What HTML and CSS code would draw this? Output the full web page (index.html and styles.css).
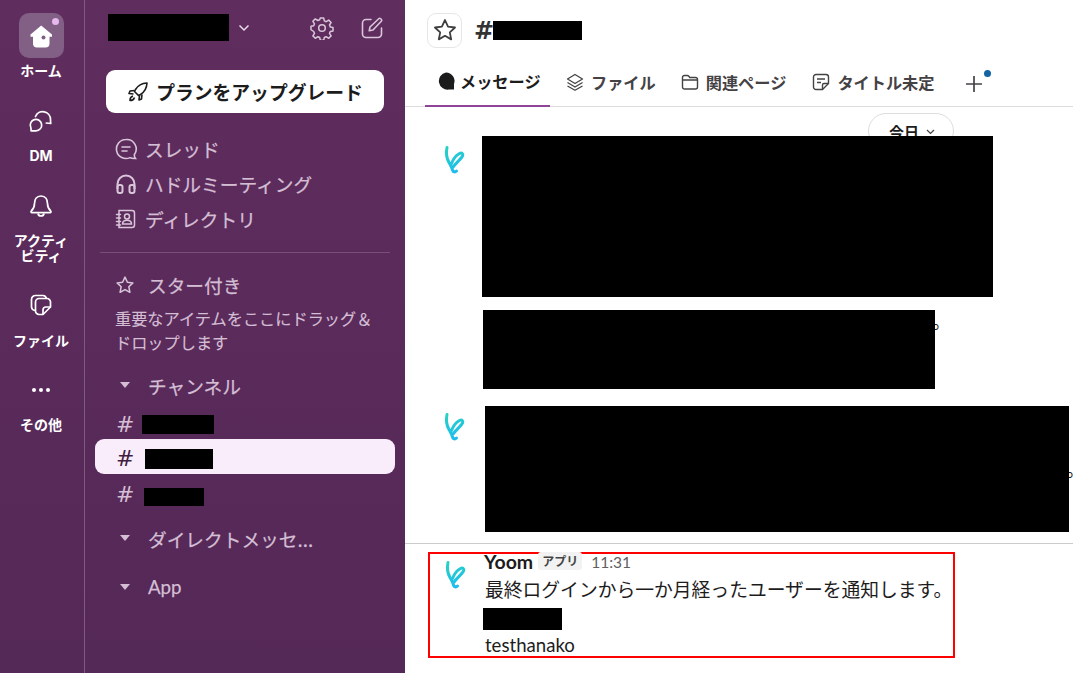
FILE: index.html
```html
<!DOCTYPE html>
<html lang="ja">
<head>
<meta charset="utf-8">
<title>Slack</title>
<link rel="stylesheet" href="styles.css">
</head>
<body>
<div class="app">
  <nav class="rail">
    <div class="rail-item home">
      <div class="home-box">
        <svg width="26" height="26" viewBox="0 0 26 26"><path d="M13.200 2.500 2.500 11.500v2.200h2.500v6.800a4 4 0 0 0 4 4h8.500a4 4 0 0 0 4-4v-6.800h2.500v-2.200z" fill="#fff"/><circle cx="15.500" cy="14.500" r="2" fill="#80607f"/></svg>
        <span class="home-dot"></span>
      </div>
      <span class="rail-label">ホーム</span>
    </div>
    <div class="rail-item dm">
      <svg width="26" height="26" viewBox="0 0 26 26" fill="none" stroke="#fff" stroke-width="1.700" stroke-linecap="round" stroke-linejoin="round"><path d="M7.500 8.500A7.800 7.800 0 0 1 22.500 11.500c0 1.400 0 2.700.3 4l-4.500-.5"/><path d="M3 22.800h5a5.700 5.700 0 1 0-5.200-3.300c.3 1 .5 2.200.2 3.300z"/></svg>
      <span class="rail-label lbl-dm">DM</span>
    </div>
    <div class="rail-item bell">
      <svg width="24" height="26" viewBox="0 0 24 26" fill="none" stroke="#fff" stroke-width="1.700" stroke-linejoin="round"><path d="M12 3c-4.500 0-6.500 3.500-6.500 7.500 0 3.500-1 5.500-3.200 7.500-.7.800-.2 1.700.7 1.700h18c.9 0 1.400-.9.700-1.700-2.200-2-3.200-4-3.200-7.500C18.500 6.500 16.500 3 12 3z"/><path d="M9 20.500c.3 1.700 1.500 2.500 3 2.500s2.700-.8 3-2.500"/></svg>
      <span class="rail-label lbl-act">アクティ<br>ビティ</span>
    </div>
    <div class="rail-item files">
      <svg width="24" height="24" viewBox="0 0 24 24" fill="none" stroke="#fff" stroke-width="1.700" stroke-linejoin="round"><path d="M6 17.500A4 4 0 0 1 2.500 14V6.500a4 4 0 0 1 4-4H14a4 4 0 0 1 3.500 3"/><path d="M10 5.500h8a3.500 3.500 0 0 1 3.500 3.500v5l-7.500 7.500H10A3.500 3.500 0 0 1 6.500 18V9A3.500 3.500 0 0 1 10 5.500z"/><path d="M21.500 14h-4.500a3 3 0 0 0-3 3v4.500"/></svg>
      <span class="rail-label lbl-file">ファイル</span>
    </div>
    <div class="rail-item more">
      <div class="dots"><i></i><i></i><i></i></div>
      <span class="rail-label lbl-more">その他</span>
    </div>
  </nav>

  <aside class="side">
    <header class="ws">
      <div class="redact ws-name"></div>
      <svg class="ws-chev" width="12" height="8" viewBox="0 0 12 8" fill="none" stroke="#e8dde8" stroke-width="1.500"><path d="m1.500 1.500 4.500 4.500 4.500-4.500"/></svg>
      <svg class="ws-gear" width="24" height="24" viewBox="0 0 24 24" fill="none" stroke="#d9c6d9" stroke-width="1.500" stroke-linejoin="round"><circle cx="12" cy="12" r="3.300"/><path d="M10.300 2h3.400l.6 2.900 1.900.8 2.500-1.600 2.400 2.400-1.600 2.500.8 1.900 2.700.6v3.400l-2.700.6-.8 1.900 1.600 2.500-2.400 2.400-2.500-1.600-1.900.8-.6 2.700h-3.400l-.6-2.700-1.900-.8-2.500 1.600-2.400-2.400 1.600-2.500-.8-1.900L1 13.700v-3.400l2.700-.6.800-1.900-1.600-2.500 2.400-2.400 2.500 1.600 1.900-.8z"/></svg>
      <svg class="ws-edit" width="24" height="24" viewBox="0 0 24 24" fill="none" stroke="#d9c6d9" stroke-width="1.600" stroke-linecap="round" stroke-linejoin="round"><path d="M11 3.500H6A3.500 3.500 0 0 0 2.500 7v11A3.500 3.500 0 0 0 6 21.500h12a3.500 3.500 0 0 0 3.500-3.500v-6"/><path d="m10 11 9-8.500c1-.9 3.500 1.500 2.500 2.500L13 14l-3.800.8z"/></svg>
    </header>
    <button class="upgrade">
      <svg width="22" height="22" viewBox="0 0 22 22" fill="none" stroke="#1d1c1d" stroke-width="1.600" stroke-linejoin="round"><path d="M20 2c-5 .3-9 2.300-11.500 6.500l-1 2 4 4 2-1C17.700 11 19.700 7 20 2z"/><path d="M7.500 9.500 3 10l-1 2.500 4.500.5M12.500 14.500 12 19l2.500-1 .5-4.500M6 15c-2 .5-3 2.500-3 4.500 2 0 4-1 4.500-3"/></svg>
      <span>プランをアップグレード</span>
    </button>
    <div class="nav-row">
      <svg width="24" height="24" viewBox="0 0 24 24" fill="none" stroke="#d9c6d9" stroke-width="1.600" stroke-linecap="round"><path d="M12 2.500a9.500 9.500 0 1 0 4 18.100c1.500.9 3.500 1 5.500.9-1-1.300-1.300-2.700-1.100-4A9.500 9.500 0 0 0 12 2.500z"/><path d="M8 10h8M8 14h5"/></svg>
      <span>スレッド</span>
    </div>
    <div class="nav-row">
      <svg width="24" height="24" viewBox="0 0 24 24" fill="none" stroke="#d9c6d9" stroke-width="2"><path d="M3.500 17v-5a8.500 8.500 0 0 1 17 0v5"/><rect x="3.500" y="13" width="5" height="8" rx="2"/><rect x="15.500" y="13" width="5" height="8" rx="2"/></svg>
      <span>ハドルミーティング</span>
    </div>
    <div class="nav-row">
      <svg width="24" height="24" viewBox="0 0 24 24" fill="none" stroke="#d9c6d9" stroke-width="1.500" stroke-linecap="round"><path d="M5 3.500h13a2.500 2.500 0 0 1 2.500 2.500v12a2.500 2.500 0 0 1-2.500 2.500H5z"/><path d="M2.500 7.500h4M2.500 11h4M2.500 14.500h4M2.500 18h4"/><circle cx="13" cy="9.500" r="2.500"/><path d="M8.500 17c0-5 9-5 9 0z"/></svg>
      <span>ディレクトリ</span>
    </div>
    <div class="divider"></div>
    <div class="sec-row star-row">
      <svg width="20" height="20" viewBox="0 0 24 24" fill="none" stroke="#d9c6d9" stroke-width="1.800" stroke-linejoin="round"><path d="m12 2.500 2.900 6.200 6.600.8-4.900 4.600 1.300 6.700-5.900-3.300-5.900 3.300 1.300-6.700-4.900-4.600 6.600-.8z"/></svg>
      <span class="star-text">スター付き</span>
    </div>
    <p class="hint">重要なアイテムをここにドラッグ＆<br>ドロップします</p>
    <div class="sec-row chan-head"><i class="tri"></i><span>チャンネル</span></div>
    <div class="chan c1"><span class="hash">#</span><div class="redact"></div></div>
    <div class="chan c2"><span class="hash">#</span><div class="redact"></div></div>
    <div class="chan c3"><span class="hash">#</span><div class="redact"></div></div>
    <div class="sec-row dm-head"><i class="tri"></i><span>ダイレクトメッセ...</span></div>
    <div class="sec-row app-head"><i class="tri"></i><span>App</span></div>
  </aside>

  <main class="main">
    <header class="title">
      <div class="star-btn"><svg width="24" height="24" viewBox="0 0 24 24" fill="none" stroke="#3f3f3f" stroke-width="1.800" stroke-linejoin="round"><path d="m12 2 3 6.600 7 .9-5.200 4.800 1.400 7.100-6.200-3.600-6.200 3.600 1.400-7.100L1.900 9.500l7-.9z"/></svg></div>
      <span class="title-hash">#</span>
      <div class="redact"></div>
    </header>
    <div class="tabs">
      <div class="tab active">
        <svg width="18" height="18" viewBox="0 0 18 18"><path d="M9 .5a8.500 8.500 0 0 1 8 11.500v5.500h-5A8.500 8.500 0 1 1 9 .5z" fill="#1d1c1d"/></svg>
        <span>メッセージ</span>
      </div>
      <div class="tab t-file">
        <svg width="18" height="18" viewBox="0 0 18 18" fill="none" stroke="#454245" stroke-width="1.300" stroke-linejoin="round"><path d="M9 1.500 1.500 6 9 10.500 16.500 6z"/><path d="m1.500 9.500 7.500 4.500 7.500-4.500M1.500 13 9 17.200l7.500-4.200"/></svg>
        <span>ファイル</span>
      </div>
      <div class="tab t-rel">
        <svg width="18" height="18" viewBox="0 0 18 18" fill="none" stroke="#454245" stroke-width="1.400" stroke-linejoin="round"><path d="M1.500 4.500a2 2 0 0 1 2-2h2.800a2 2 0 0 1 1.500.7l.9 1.300h5.800a2 2 0 0 1 2 2v7.500a2 2 0 0 1-2 2h-11a2 2 0 0 1-2-2zM1.500 7h15"/></svg>
        <span>関連ページ</span>
      </div>
      <div class="tab t-title">
        <svg width="18" height="18" viewBox="0 0 18 18" fill="none" stroke="#454245" stroke-width="1.400" stroke-linejoin="round"><path d="M4 1.500h10A2.500 2.500 0 0 1 16.500 4v6.500l-6 6H4A2.500 2.500 0 0 1 1.500 14V4A2.500 2.500 0 0 1 4 1.500z"/><path d="M5 6h8M5 9.500h4M16.500 10.500H12a1.500 1.500 0 0 0-1.500 1.500v4.500"/></svg>
        <span>タイトル未定</span>
      </div>
      <div class="tab-add">
        <svg width="16" height="16" viewBox="0 0 16 16" stroke="#454245" stroke-width="1.700"><path d="M8 0v16M0 8h16"/></svg>
        <i class="add-dot"></i>
      </div>
    </div>
    <div class="feed">
      <div class="date-row"><div class="date-pill"><span>今日</span><svg width="9" height="6" viewBox="0 0 9 6" fill="none" stroke="#454245" stroke-width="1.200"><path d="m1 1 3.500 3.500L8 1"/></svg></div></div>
      <section class="m1">
        <div class="avatar"><svg width="24" height="32" viewBox="0 0 24 32" fill="none"><use href="#yoom"/></svg></div>
        <div class="redact b1"></div>
      </section>
      <div class="m1b"><div class="redact b2"></div><span class="maru">。</span></div>
      <section class="m2">
        <div class="avatar"><svg width="24" height="32" viewBox="0 0 24 32" fill="none"><use href="#yoom"/></svg></div>
        <div class="redact b3"></div><span class="maru m2-maru">。</span>
      </section>
      <div class="rule"></div>
      <section class="boxed">
        <div class="avatar a3"><svg width="24" height="32" viewBox="0 0 24 32" fill="none"><use href="#yoom"/></svg></div>
        <div class="msg">
          <div class="meta"><b>Yoom</b><span class="tag">アプリ</span><time>11:31</time></div>
          <div class="line1">最終ログインから一か月経ったユーザーを通知します。</div>
          <div class="redact b4"></div>
          <div class="line2">testhanako</div>
        </div>
      </section>
    </div>
  </main>
</div>
<svg class="defs" width="0" height="0">
  <defs>
    <linearGradient id="yg" gradientUnits="userSpaceOnUse" x1="4" y1="3" x2="14" y2="29"><stop offset="0" stop-color="#28d2c0"/><stop offset="1" stop-color="#1cbcf0"/></linearGradient>
    <path id="yoom" d="M5 3.500C3.800 9 4.800 14.500 7 18.500c1.500 2.800 2.800 5 3.500 7.500.6 2 2.500 2.500 4 1M9.500 19.500C11 15.500 14.500 11 17.500 9.500c2.500-1.300 4 .5 3 2.500-1.500 3-6 6.500-9.500 11" stroke="url(#yg)" stroke-width="3" stroke-linecap="round"/>
  </defs>
</svg>
</body>
</html>
```
FILE: styles.css
```css
* { box-sizing: border-box; }
html, body { margin: 0; height: 100%; overflow: hidden; }
body { font-family: "Noto Sans CJK JP", "Noto Sans", sans-serif; background: #fff; color: #1d1c1d; }
.defs { position: absolute; }
.redact { background: #000; position: relative; z-index: 1; flex: none; }
.app { display: flex; height: 673px; width: 1073px; }

.rail { width: 85px; flex: none; background: linear-gradient(#5f2d5e, #542857); border-right: 1px solid #7f5a80; display: flex; flex-direction: column; align-items: flex-start; padding-top: 13px; }
.rail-item { display: flex; flex-direction: column; align-items: center; width: 82px; }
.rail-label { color: #fff; font-size: 14px; font-weight: 700; line-height: 15px; text-align: center; }
.home-box { position: relative; width: 45px; height: 45px; border-radius: 10px; background: #825f85; display: flex; align-items: center; justify-content: center; }
.home-dot { position: absolute; top: 5px; right: 5px; width: 7px; height: 7px; border-radius: 50%; background: #e6b8ee; }
.home .rail-label { margin-top: 5px; }
.dm { margin-top: 30px; }
.lbl-dm { margin-top: 14px; font-family: "Inter", sans-serif; font-size: 14px; }
.bell { margin-top: 30px; }
.lbl-act { margin-top: 14px; }
.files { margin-top: 30px; }
.lbl-file { margin-top: 16px; }
.more { margin-top: 40px; }
.dots { display: flex; gap: 3px; height: 4px; margin-bottom: 25px; }
.dots i { width: 4px; height: 4px; border-radius: 50%; background: #fff; }

.side { width: 320px; flex: none; background: linear-gradient(#5f2d5e, #542857); color: #d4bed4; padding: 14px 10px 0; display: flex; flex-direction: column; }
.ws { display: flex; align-items: center; height: 27px; padding-left: 13px; }
.ws-name { width: 121px; height: 27px; }
.ws-chev { margin-left: 9px; }
.ws-gear { margin-left: 60px; }
.ws-edit { margin-left: 26px; }
.upgrade { margin: 29px 0 0 11px; width: 278px; height: 43px; background: #fff; border: 0; border-radius: 9px; display: flex; align-items: center; justify-content: center; gap: 7px; font: 700 18.800px "Noto Sans CJK JP", sans-serif; color: #1d1c1d; padding: 0; }
.nav-row { display: flex; align-items: center; gap: 7px; height: 35px; padding-left: 19px; font-size: 18.700px; -webkit-text-stroke: .25px currentColor; }
.upgrade + .nav-row { margin-top: 18px; }
.divider { height: 1px; background: #765077; margin: 16px 5px 0; }
.sec-row { display: flex; align-items: center; font-size: 18.700px; height: 28px; -webkit-text-stroke: .25px currentColor; }
.star-row { margin-top: 18px; padding-left: 20px; gap: 13px; }
.star-text { padding-bottom: 2px; }
.hint { margin: 7px 0 0 20px; font-size: 16.200px; line-height: 24px; -webkit-text-stroke: .15px currentColor; }
.tri { width: 0; height: 0; border-left: 5px solid transparent; border-right: 5px solid transparent; border-top: 6px solid #d4bed4; margin-right: 18px; }
.chan-head { margin-top: 17px; padding-left: 25px; }
.chan { display: flex; align-items: center; height: 35px; padding-left: 21px; width: 300px; border-radius: 9px; }
.hash { font: 22px/1 "DejaVu Sans", sans-serif; width: 26px; flex: none; }
.c1 { margin-top: 8px; }
.c1 .redact { width: 72px; height: 19px; }
.c2 { background: #f9edfc; color: #421d42; margin-top: -3px; padding-top: 4px; }
.c2 .hash { width: 29px; }
.c2 .redact { width: 68px; height: 20px; }
.c3 { margin-top: 5px; }
.c3 .hash { width: 28px; margin-bottom: 3px; }
.c3 .redact { width: 60px; height: 18px; }
.dm-head { margin-top: 10px; padding-left: 25px; }
.app-head { margin-top: 21px; padding-left: 25px; font-family: "Lato", sans-serif; }

.main { flex: 1; min-width: 0; display: flex; flex-direction: column; }
.title { display: flex; align-items: center; height: 60px; padding-left: 22px; }
.star-btn { width: 35px; height: 35px; border: 1px solid #e6e6e6; border-radius: 9px; display: flex; align-items: center; justify-content: center; }
.title-hash { font: 700 24px/1 "DejaVu Sans", sans-serif; margin: 2px 0 0 12px; color: #333; width: 18px; }
.title .redact { width: 89px; height: 19px; margin-left: 1px; }
.tabs { display: flex; align-items: center; height: 47px; border-bottom: 1px solid #ddd; color: #454245; font-size: 16.200px; font-weight: 700; }
.tab { display: flex; align-items: center; gap: 7px; height: 47px; padding-bottom: 2px; }
.tab.active { color: #1d1c1d; margin-left: 20px; width: 125px; padding-left: 12px; gap: 5px; border-bottom: 2px solid #8e4597; }
.t-file { margin-left: 16px; }
.t-rel { margin-left: 25px; }
.t-title { margin-left: 26px; }
.tab-add { margin: 0 0 5px 31px; position: relative; height: 16px; }
.add-dot { position: absolute; right: -9px; top: -3px; width: 7px; height: 7px; border-radius: 50%; background: #1264a3; }

.feed { flex: 1; overflow: hidden; }
.date-row { height: 29px; display: flex; overflow: hidden; padding: 6px 0 0 463px; }
.date-pill { width: 86px; height: 36px; border: 1px solid #ddd; border-radius: 18px; font-size: 15px; font-weight: 700; line-height: 34px; flex: none; display: flex; align-items: center; gap: 7px; padding: 2px 0 0 20px; }
.m1 { display: flex; height: 161px; padding-left: 37px; }
.avatar { width: 24px; height: 32px; margin-top: 8px; flex: none; }
.b1 { width: 511px; height: 161px; margin-left: 16px; }
.m1b { display: flex; margin: 13px 0 0 78px; height: 79px; }
.b2 { width: 452px; height: 79px; }
.maru { font-size: 18.800px; line-height: 1; margin: 2px 0 0 -3px; }
.m2 { display: flex; height: 126px; padding-left: 37px; margin-top: 17px; }
.m2 .avatar { margin-top: 5px; }
.b3 { width: 584px; height: 126px; margin-left: 19px; }
.m2-maru { margin-top: 54px; }
.rule { height: 1px; background: #ccc; margin-top: 11px; }
.boxed { display: flex; width: 527px; height: 106px; margin: 8px 0 0 23px; border: 2px solid #f00; padding-left: 13px; }
.a3 { margin-top: 5px; }
.msg { margin-left: 18px; width: 470px; margin-top: -5px; }
.meta { display: flex; align-items: center; height: 24px; font-family: "Lato", sans-serif; }
.meta b { font-size: 19.500px; font-weight: 700; margin-left: -1px; }
.tag { font: 700 12px "Noto Sans CJK JP", sans-serif; background: #f2f2f2; border-radius: 3px; padding: 0 4px; margin-left: 5px; color: #444; line-height: 18px; }
.meta time { margin-left: 9px; font-size: 15.500px; color: #616061; padding-top: 2px; }
.line1 { font-size: 18.800px; line-height: 26px; margin-top: 3px; white-space: nowrap; }
.b4 { width: 79px; height: 22px; margin: 6px 0 0 -2px; }
.line2 { font: 18.600px/24px "Lato", sans-serif; margin-top: 3px; }
```
